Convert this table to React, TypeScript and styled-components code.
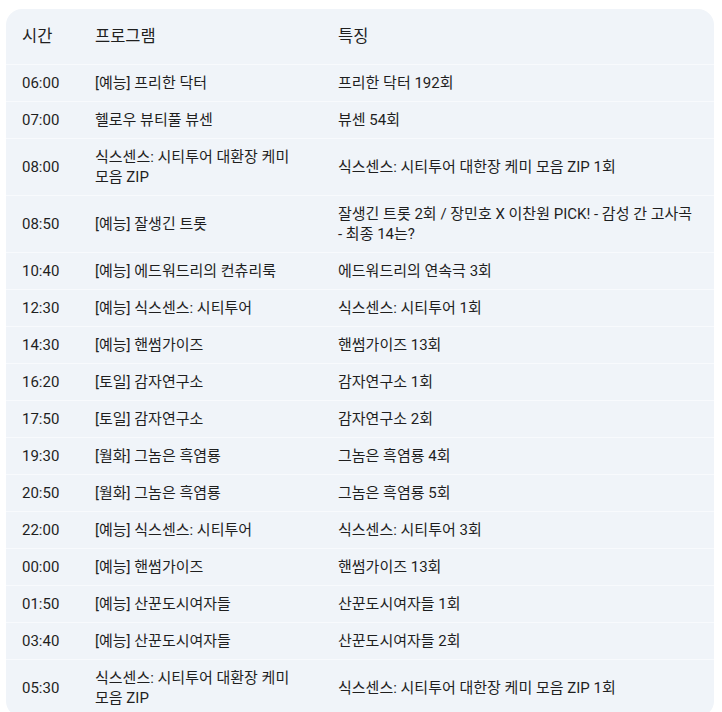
import React from 'react';
import styled, { createGlobalStyle } from 'styled-components';

const GlobalStyle = createGlobalStyle`
  body {
    margin: 0;
    background: #ffffff;
    font-family: Roboto, "Noto Sans CJK KR", sans-serif;
    color: #1f1f1f;
  }
  th, td {
    box-sizing: border-box;
  }
`;

const Page = styled.div`
  padding: 9px 8px 0 6px;
`;

const Card = styled.div`
  background-color: #f0f4f9;
  border-radius: 16px;
  overflow: hidden;
`;

const Table = styled.table`
  width: 100%;
  border-collapse: collapse;
  table-layout: fixed;
  word-break: keep-all;
`;

const HeadCell = styled.th<{ $w?: number }>`
  width: ${({ $w }) => ($w ? `${$w}px` : 'auto')};
  text-align: left;
  font-weight: 400;
  font-size: 16.5px;
  line-height: 23px;
  padding: 16px 16px;
  color: #1f1f1f;
  border-bottom: 1px solid #f8fafd;
`;

const Row = styled.tr`
  border-bottom: 1px solid #f8fafd;
`;

const Cell = styled.td`
  font-size: 15px;
  line-height: 20px;
  padding: 8px 16px;
  vertical-align: middle;
  color: #1f1f1f;
`;

type Item = { time: string; program: string; feature: string };

const items: Item[] = [
  { time: '06:00', program: '[예능] 프리한 닥터', feature: '프리한 닥터 192회' },
  { time: '07:00', program: '헬로우 뷰티풀 뷰센', feature: '뷰센 54회' },
  { time: '08:00', program: '식스센스: 시티투어 대환장 케미 모음 ZIP', feature: '식스센스: 시티투어 대한장 케미 모음 ZIP 1회' },
  { time: '08:50', program: '[예능] 잘생긴 트롯', feature: '잘생긴 트롯 2회 / 장민호 X 이찬원 PICK! - 감성 간 고사곡 - 최종 14는?' },
  { time: '10:40', program: '[예능] 에드워드리의 컨츄리룩', feature: '에드워드리의 연속극 3회' },
  { time: '12:30', program: '[예능] 식스센스: 시티투어', feature: '식스센스: 시티투어 1회' },
  { time: '14:30', program: '[예능] 핸썸가이즈', feature: '핸썸가이즈 13회' },
  { time: '16:20', program: '[토일] 감자연구소', feature: '감자연구소 1회' },
  { time: '17:50', program: '[토일] 감자연구소', feature: '감자연구소 2회' },
  { time: '19:30', program: '[월화] 그놈은 흑염룡', feature: '그놈은 흑염룡 4회' },
  { time: '20:50', program: '[월화] 그놈은 흑염룡', feature: '그놈은 흑염룡 5회' },
  { time: '22:00', program: '[예능] 식스센스: 시티투어', feature: '식스센스: 시티투어 3회' },
  { time: '00:00', program: '[예능] 핸썸가이즈', feature: '핸썸가이즈 13회' },
  { time: '01:50', program: '[예능] 산꾼도시여자들', feature: '산꾼도시여자들 1회' },
  { time: '03:40', program: '[예능] 산꾼도시여자들', feature: '산꾼도시여자들 2회' },
  { time: '05:30', program: '식스센스: 시티투어 대환장 케미 모음 ZIP', feature: '식스센스: 시티투어 대한장 케미 모음 ZIP 1회' },
];

const App = () => {
  return (
    <>
      <GlobalStyle />
      <Page>
        <Card>
          <Table>
            <thead>
              <tr>
                <HeadCell $w={73}>시간</HeadCell>
                <HeadCell $w={243}>프로그램</HeadCell>
                <HeadCell>특징</HeadCell>
              </tr>
            </thead>
            <tbody>
              {items.map((it, i) => (
                <Row key={i}>
                  <Cell>{it.time}</Cell>
                  <Cell>{it.program}</Cell>
                  <Cell>{it.feature}</Cell>
                </Row>
              ))}
            </tbody>
          </Table>
        </Card>
      </Page>
    </>
  );
};

export default App;
